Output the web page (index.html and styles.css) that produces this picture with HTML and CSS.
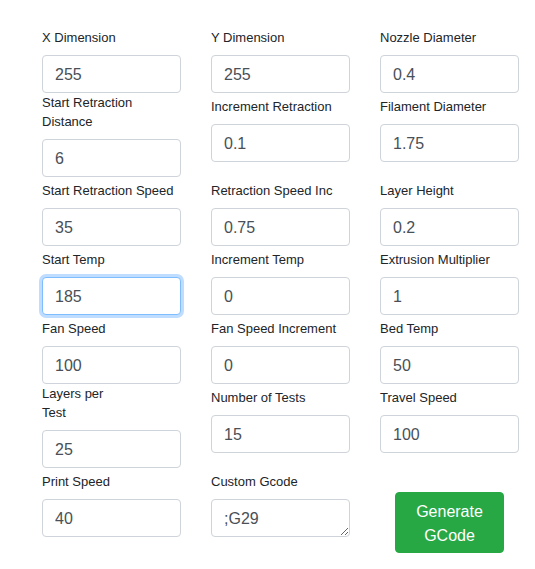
FILE: index.html
```html
<!DOCTYPE html>
<html lang="en">
<head>
<meta charset="utf-8">
<title>Retraction Test</title>
<link rel="stylesheet" href="styles.css">
</head>
<body>
<form class="form-grid">
  <div class="cell"><label class="lbl">X Dimension</label><input class="field" value="255"></div>
  <div class="cell"><label class="lbl">Y Dimension</label><input class="field" value="255"></div>
  <div class="cell"><label class="lbl">Nozzle Diameter</label><input class="field" value="0.4"></div>

  <div class="cell"><label class="lbl">Start Retraction Distance</label><input class="field" value="6"></div>
  <div class="cell"><label class="lbl">Increment Retraction</label><input class="field" value="0.1"></div>
  <div class="cell"><label class="lbl">Filament Diameter</label><input class="field" value="1.75"></div>

  <div class="cell"><label class="lbl">Start Retraction Speed</label><input class="field" value="35"></div>
  <div class="cell"><label class="lbl">Retraction Speed Inc</label><input class="field" value="0.75"></div>
  <div class="cell"><label class="lbl">Layer Height</label><input class="field" value="0.2"></div>

  <div class="cell"><label class="lbl">Start Temp</label><input class="field focused" value="185"></div>
  <div class="cell"><label class="lbl">Increment Temp</label><input class="field" value="0"></div>
  <div class="cell"><label class="lbl">Extrusion Multiplier</label><input class="field" value="1"></div>

  <div class="cell"><label class="lbl">Fan Speed</label><input class="field" value="100"></div>
  <div class="cell"><label class="lbl">Fan Speed Increment</label><input class="field" value="0"></div>
  <div class="cell"><label class="lbl">Bed Temp</label><input class="field" value="50"></div>

  <div class="cell"><label class="lbl">Layers per<br>Test</label><input class="field" value="25"></div>
  <div class="cell"><label class="lbl">Number of Tests</label><input class="field" value="15"></div>
  <div class="cell"><label class="lbl">Travel Speed</label><input class="field" value="100"></div>

  <div class="cell"><label class="lbl">Print Speed</label><input class="field" value="40"></div>
  <div class="cell"><label class="lbl">Custom Gcode</label><textarea class="field area">;G29</textarea></div>
  <div class="cell"><button type="button" class="btn-go">Generate GCode</button></div>
</form>
</body>
</html>
```

FILE: styles.css
```css
html, body {
  margin: 0;
  padding: 0;
  background: #ffffff;
}
body {
  font-family: "Liberation Sans", Arial, sans-serif;
  color: #212529;
}
.form-grid {
  display: grid;
  grid-template-columns: repeat(3, 139px);
  column-gap: 30px;
  align-items: start;
  padding: 24px 0 0 42px;
  margin: 0;
}
.cell {
  display: flex;
  flex-direction: column;
  align-items: flex-start;
}
.lbl {
  display: flex;
  align-items: flex-end;
  min-height: 23px;
  font-size: 13px;
  line-height: 19px;
  margin-bottom: 8px;
  color: #212529;
}
.field {
  box-sizing: border-box;
  width: 139px;
  height: 38px;
  padding: 7px 12px 5px;
  font-family: "Liberation Sans", Arial, sans-serif;
  font-size: 16px;
  line-height: 24px;
  color: #495057;
  background: #ffffff;
  border: 1px solid #ced4da;
  border-radius: 4px;
  outline: none;
  margin: 0;
}
.field.focused {
  border-color: #80bdff;
  box-shadow: 0 0 0 3px rgba(0, 123, 255, 0.25);
}
.area {
  display: block;
  resize: vertical;
  overflow: hidden;
}
.btn-go {
  box-sizing: border-box;
  width: 109px;
  height: 61px;
  margin: 24px 0 0 15px;
  padding: 7px 12px 5px;
  font-family: "Liberation Sans", Arial, sans-serif;
  font-size: 16px;
  line-height: 23.5px;
  color: #ffffff;
  background: #28a745;
  border: 1px solid #28a745;
  border-radius: 4px;
  text-align: center;
}
```
